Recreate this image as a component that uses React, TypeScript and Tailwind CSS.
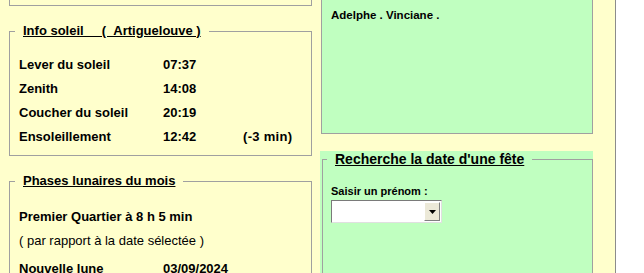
export default function App() {
  const soleil = [
    { label: 'Lever du soleil', value: '07:37', extra: '' },
    { label: 'Zenith', value: '14:08', extra: '' },
    { label: 'Coucher du soleil', value: '20:19', extra: '' },
    { label: 'Ensoleillement', value: '12:42', extra: '(-3 min)' },
  ];

  return (
    <div className="h-[273px] overflow-hidden bg-white text-black font-['Liberation_Sans',Arial,sans-serif]">
      <div className="flex h-full w-[616px] items-start border-r border-[#8c8c8c] bg-[#ffffcc]">
        {/* colonne gauche */}
        <div className="ml-[9px] w-[303px] shrink-0">
          <div className="h-[6px] border-x border-b border-[#a0a0a0]" />

          <fieldset className="mt-[17px] border border-[#a0a0a0] px-[9px] pb-[6px]">
            <legend className="-ml-[4px] px-[8px] text-[13px] font-bold leading-[16px] underline">
              Info soleil&nbsp;&nbsp;&nbsp;&nbsp; ( &nbsp;Artiguelouve )
            </legend>
            <div className="mt-[14px] text-[13px] font-bold">
              {soleil.map((r) => (
                <div key={r.label} className="flex h-[24px] items-center">
                  <span className="w-[144px]">{r.label}</span>
                  <span className="w-[80px]">{r.value}</span>
                  <span className="tracking-[0.3px]">{r.extra}</span>
                </div>
              ))}
            </div>
          </fieldset>

          <fieldset className="mt-[17px] border border-[#a0a0a0] px-[9px] pb-[8px]">
            <legend className="-ml-[4px] px-[8px] text-[13px] font-bold leading-[16px] underline">
              Phases lunaires du mois
            </legend>
            <div className="mt-[16px] text-[13px]">
              <div className="flex h-[24px] items-center font-bold">Premier Quartier à 8 h 5 min</div>
              <div className="flex h-[24px] items-center">( par rapport à la date sélectée )</div>
              <div className="mt-[4px] flex h-[24px] items-center font-bold">
                <span className="w-[144px]">Nouvelle lune</span>
                <span>03/09/2024</span>
              </div>
            </div>
          </fieldset>
        </div>

        {/* colonne droite */}
        <div className="ml-[8px] w-[273px] shrink-0">
          <div className="ml-[1px] h-[134px] w-[272px] border-x border-b border-[#a0a0a0] bg-[#c0ffc0] px-[9px] pt-[9px]">
            <p className="text-[11.5px] font-bold leading-[13px]">Adelphe . Vinciane .</p>
          </div>

          <div className="mt-[17px] h-[200px] bg-[#c0ffc0] pl-[2px]">
            <fieldset className="h-[200px] w-[271px] border border-[#a0a0a0] px-[8px]">
              <legend className="-ml-[4px] px-[8px] text-[14px] font-bold leading-[16px] underline">
                Recherche la date d'une fête
              </legend>
              <p className="mt-[18px] text-[11px] font-bold leading-[13px]">Saisir un prénom :</p>
              <div className="mt-[2px] flex h-[23px] w-[111px] border border-t-[#7a7a7a] border-l-[#7a7a7a] border-r-[#e0e0e0] border-b-[#e0e0e0] bg-white">
                <div className="flex-1" />
                <div className="m-[1px] flex w-[16px] items-center justify-center border border-t-white border-l-white border-r-[#808080] border-b-[#808080] bg-[#ece9d8]">
                  <svg width="7" height="4" viewBox="0 0 7 4">
                    <path d="M0 0h7L3.5 4z" fill="#000" />
                  </svg>
                </div>
              </div>
            </fieldset>
          </div>
        </div>
      </div>
    </div>
  );
}
